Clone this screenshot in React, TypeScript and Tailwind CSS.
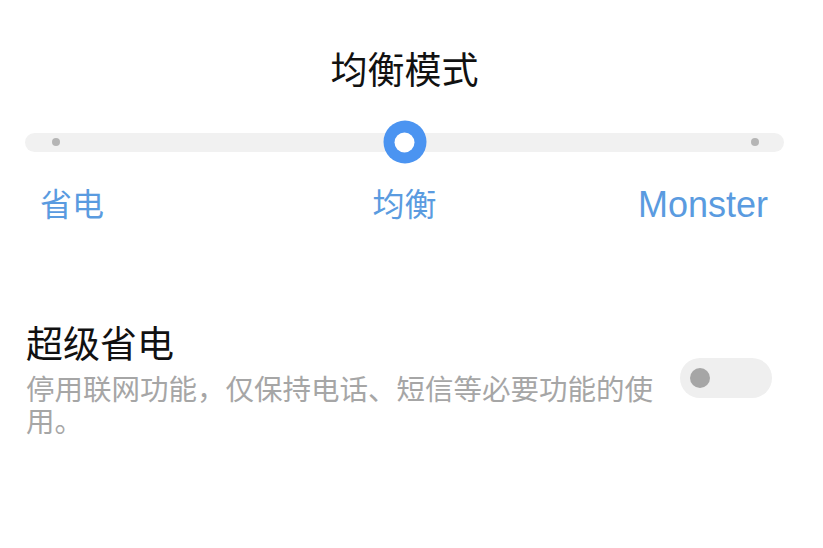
const fontStack = { fontFamily: '"Liberation Sans", "Noto Sans CJK SC", sans-serif' };

const ModeSlider = () => (
    <div className="relative flex items-center h-[44px]">
        {/* Track with end markers */}
        <div className="w-full h-[19px] rounded-full bg-[#f1f1f1] flex items-center justify-between pl-[27px] pr-[25px]">
            <span className="w-[8px] h-[8px] rounded-full bg-[#b5b5b5]" />
            <span className="w-[8px] h-[8px] rounded-full bg-[#b5b5b5]" />
        </div>
        {/* Thumb */}
        <div className="absolute left-1/2 top-1/2 -translate-x-1/2 -translate-y-1/2 w-[43px] h-[43px] rounded-full bg-[#4b94f1] flex items-center justify-center">
            <div className="w-[20px] h-[20px] rounded-full bg-white" />
        </div>
    </div>
);

const Toggle = ({ checked = false }: { checked?: boolean }) => (
    <div className={`w-[92px] h-[40px] rounded-full flex items-center px-[10px] shrink-0 ${checked ? 'bg-[#4b94f1] justify-end' : 'bg-[#efefef] justify-start'}`}>
        <div className={`w-[20px] h-[20px] rounded-full ${checked ? 'bg-white' : 'bg-[#a6a6a6]'}`} />
    </div>
);

export default function App() {
    return (
        <div className="w-[823px] h-[548px] bg-white pl-[25px] pr-[39px] overflow-hidden" style={fontStack}>
            <h1 className="mt-[52px] h-[40px] text-[37px] leading-[40px] text-center text-[#111111] font-normal">
                均衡模式
            </h1>

            <div className="mt-[28px]">
                <ModeSlider />
            </div>

            <div className="mt-[23px] grid grid-cols-3 text-[#5a9be0] h-[36px] leading-[36px]">
                <span className="pl-[15px] text-[32px]">省电</span>
                <span className="text-center text-[32px]">均衡</span>
                <span className="text-right pr-[16px] text-[36px]">Monster</span>
            </div>

            <div className="mt-[103px] flex items-start justify-between">
                <div className="pl-[1px]">
                    <h2 className="h-[40px] text-[37px] leading-[40px] text-[#111111] font-normal">超级省电</h2>
                    <p className="mt-[8px] w-[640px] text-[28.5px] leading-[32px] text-[#a6a6a6]">
                        停用联网功能，仅保持电话、短信等必要功能的使用。
                    </p>
                </div>
                <div className="mt-[32px] mr-[12px]">
                    <Toggle />
                </div>
            </div>
        </div>
    );
}
